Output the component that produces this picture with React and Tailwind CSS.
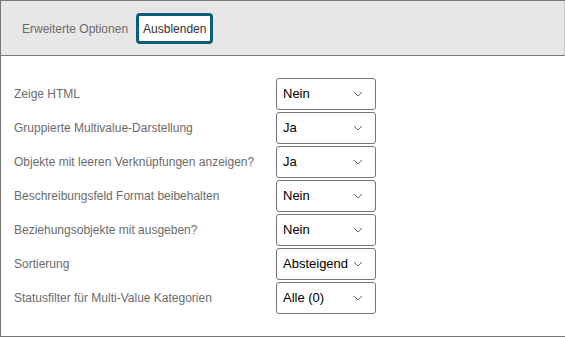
import React from 'react';

const rows = [
    { label: 'Zeige HTML', value: 'Nein' },
    { label: 'Gruppierte Multivalue-Darstellung', value: 'Ja' },
    { label: 'Objekte mit leeren Verknüpfungen anzeigen?', value: 'Ja' },
    { label: 'Beschreibungsfeld Format beibehalten', value: 'Nein' },
    { label: 'Beziehungsobjekte mit ausgeben?', value: 'Nein' },
    { label: 'Sortierung', value: 'Absteigend' },
    { label: 'Statusfilter für Multi-Value Kategorien', value: 'Alle (0)' },
];

const Chevron = () => (
    <svg width="10" height="6" viewBox="0 0 10 6" fill="none" className="shrink-0">
        <path d="M1 1 L5 5 L9 1" stroke="#666" strokeWidth="1" />
    </svg>
);

const FakeSelect = ({ value }) => (
    <div className="w-[100px] h-[32px] border border-[#767676] rounded-[3px] bg-white flex items-center pl-[6px] pr-[12px]">
        <span className="flex-1 text-[13px] text-black whitespace-nowrap">{value}</span>
        <Chevron />
    </div>
);

const App = () => {
    return (
        <div className="w-[565px] h-[338px] bg-white overflow-hidden font-['Liberation_Sans',Arial,sans-serif]">
            <div className="border-l border-t border-b border-[#767676] flex flex-col">
                {/* Header */}
                <div className="h-[55px] bg-[#e6e7e6] border-b border-r border-b-[#767676] border-r-[#c8c8c8] flex items-center pl-[21px] gap-[8px] pt-[1px]">
                    <span className="text-[12px] text-[#6b6b6b]">Erweiterte Optionen</span>
                    <button className="h-[31px] px-[4px] bg-white border-[3px] border-[#0d5c78] rounded-[4px] text-[12px] text-[#333]">
                        Ausblenden
                    </button>
                </div>

                {/* Options */}
                <div className="flex flex-col gap-[2px] pt-[22px] pb-[22px] pl-[13px]">
                    {rows.map((r) => (
                        <div key={r.label} className="flex items-center h-[32px]">
                            <span className="w-[262px] text-[12px] text-[#6b6b6b]">{r.label}</span>
                            <FakeSelect value={r.value} />
                        </div>
                    ))}
                </div>
            </div>
        </div>
    );
};

export default App;
